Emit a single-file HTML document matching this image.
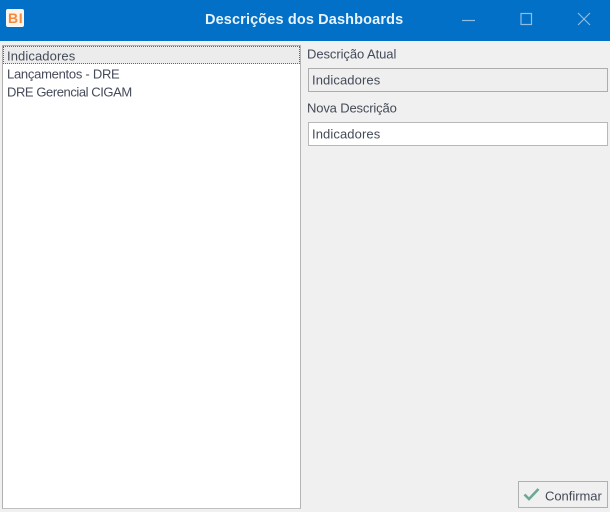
<!DOCTYPE html>
<html>
<head>
<meta charset="utf-8">
<style>
html,body{margin:0;padding:0;width:610px;height:512px;overflow:hidden;background:#f0f0f0;font-family:"Liberation Sans",sans-serif;color:#444a58;}
div{position:absolute;box-sizing:border-box;white-space:nowrap;}
.t{font-size:13px;line-height:16px;filter:blur(.3px);transform:translateY(-.5px);}
</style>
</head>
<body>
<div style="left:0;top:0;width:610px;height:41px;background:#0170c6;"></div>
<div style="left:6px;top:9px;width:18px;height:18px;background:#fdf3ea;border:1px solid #f4f8fb;border-radius:2px;filter:blur(.3px);"></div>
<div style="left:8px;top:11px;width:15px;height:15px;color:#f58a3c;font-size:14px;font-weight:bold;line-height:15px;letter-spacing:.6px;filter:blur(.3px);">BI</div>
<div style="left:205px;top:11px;color:#eaf3fb;font-size:14.5px;font-weight:bold;line-height:18px;letter-spacing:.13px;filter:blur(.3px);">Descrições dos Dashboards</div>
<svg style="position:absolute;left:460px;top:8px;" width="140" height="24" fill="none" stroke="#8fbde3" stroke-width="1.2">
<path d="M2 12.5H15"/>
<rect x="61" y="5.5" width="10.5" height="11"/>
<path d="M118 5L130 17M130 5L118 17"/>
</svg>

<div style="left:2px;top:45px;width:299px;height:464px;background:#fff;border:1px solid #b0b0b0;border-right-color:#b5b5b5;border-bottom-color:#c0c0c0;"></div>
<div style="left:3px;top:46px;width:297px;height:18px;background:#ececec;border:1px dotted #666;"></div>
<div class="t" style="left:7px;top:49px;letter-spacing:.1px;">Indicadores</div>
<div class="t" style="left:7px;top:67px;letter-spacing:-.27px;">Lançamentos - DRE</div>
<div class="t" style="left:7px;top:85px;letter-spacing:-.43px;">DRE Gerencial CIGAM</div>

<div class="t" style="left:307px;top:47px;letter-spacing:-.07px;">Descrição Atual</div>
<div style="left:308px;top:68px;width:300px;height:24px;background:#efefef;border:1px solid #adadad;"></div>
<div class="t" style="left:312px;top:73px;letter-spacing:.1px;">Indicadores</div>
<div class="t" style="left:307px;top:101px;letter-spacing:-.15px;">Nova Descrição</div>
<div style="left:308px;top:122px;width:300px;height:24px;background:#fff;border:1px solid #b8b8b8;"></div>
<div class="t" style="left:312px;top:127px;letter-spacing:.1px;">Indicadores</div>

<div style="left:518px;top:481px;width:90px;height:27px;background:#f0f0f0;border:1px solid #b0b0b0;"></div>
<svg style="position:absolute;left:523px;top:487px;" width="18" height="14" fill="none" stroke="#6da896" stroke-width="2.6">
<path d="M1.5 7.5L6 12L15.5 2"/>
</svg>
<div class="t" style="left:545px;top:489px;letter-spacing:-.03px;">Confirmar</div>
</body>
</html>
